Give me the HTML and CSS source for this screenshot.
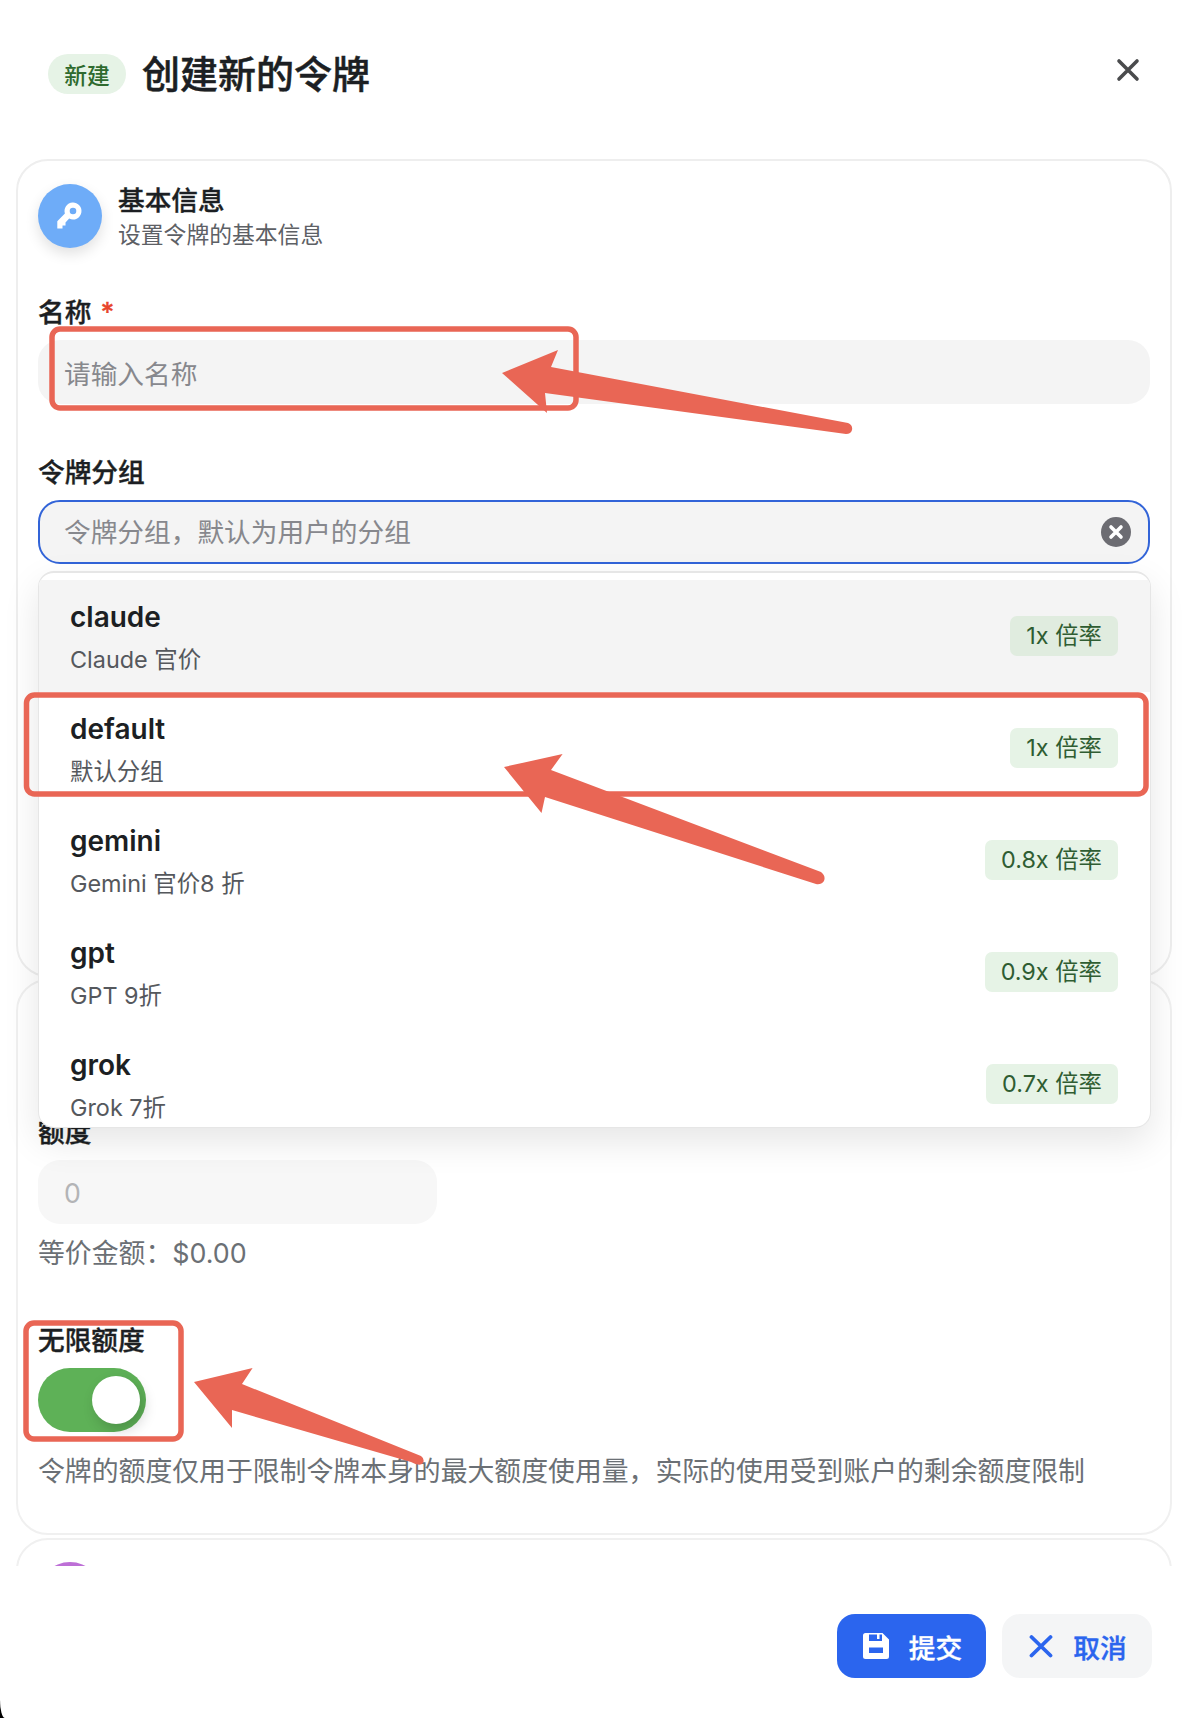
FILE: index.html
```html
<!DOCTYPE html>
<html lang="zh-CN">
<head>
    <meta charset="UTF-8">
    <meta name="viewport" content="width=device-width, initial-scale=1.0">
    <title>创建新的令牌</title>
    <link rel="stylesheet" href="styles.css">
</head>
<body>
    <div class="modal">
        <div class="modal-header">
            <span class="tag-new">新建</span>
            <h1>创建新的令牌</h1>
            <svg class="close-icon" width="24" height="24" viewBox="0 0 24 24">
                <path d="M3 3L21 21M21 3L3 21"/>
            </svg>
        </div>

        <div class="modal-body">
            <div class="card card-basic">
                <div class="card-head">
                    <div class="avatar avatar-blue">
                        <svg width="64" height="64" viewBox="0 0 64 64">
                            <path fill="#fff" fill-rule="evenodd" d="M26.900 29.600A8.500 8.500 0 1 1 31.200 34.600L27.500 38.500V41.500H24.500V44.500H19.300V37.200ZM35 23.700a3.300 3.300 0 1 0 0 6.600 3.300 3.300 0 0 0 0-6.600Z"/>
                        </svg>
                    </div>
                    <div>
                        <div class="card-title">基本信息</div>
                        <div class="card-sub">设置令牌的基本信息</div>
                    </div>
                </div>

                <label class="field-label field-first">名称 <span class="required">*</span></label>
                <input class="text-input name-input" type="text" placeholder="请输入名称">

                <label class="field-label field-next">令牌分组</label>
                <div class="select-field">
                    <input class="text-input text-input-focus" type="text" placeholder="令牌分组，默认为用户的分组">
                    <svg class="clear-icon" width="30" height="30" viewBox="0 0 30 30">
                        <circle cx="15" cy="15" r="15" fill="#6c6c72"/>
                        <path d="M10 10L20 20M20 10L10 20" stroke="#fff" stroke-width="3.600" stroke-linecap="round"/>
                    </svg>

                    <div class="group-menu">
                        <div class="group-item group-item-active">
                            <div>
                                <div class="group-name">claude</div>
                                <div class="group-desc">Claude 官价</div>
                            </div>
                            <span class="ratio ratio-active">1x 倍率</span>
                        </div>
                        <div class="group-item">
                            <div>
                                <div class="group-name">default</div>
                                <div class="group-desc">默认分组</div>
                            </div>
                            <span class="ratio">1x 倍率</span>
                        </div>
                        <div class="group-item">
                            <div>
                                <div class="group-name">gemini</div>
                                <div class="group-desc">Gemini 官价8 折</div>
                            </div>
                            <span class="ratio">0.8x 倍率</span>
                        </div>
                        <div class="group-item">
                            <div>
                                <div class="group-name">gpt</div>
                                <div class="group-desc">GPT 9折</div>
                            </div>
                            <span class="ratio">0.9x 倍率</span>
                        </div>
                        <div class="group-item">
                            <div>
                                <div class="group-name">grok</div>
                                <div class="group-desc">Grok 7折</div>
                            </div>
                            <span class="ratio">0.7x 倍率</span>
                        </div>
                    </div>
                </div>
            </div>

            <div class="card card-quota">
                <label class="field-label">额度</label>
                <input class="text-input quota-input" type="text" placeholder="0" disabled>
                <div class="help-text">等价金额：$0.00</div>

                <label class="field-label field-unlimited">无限额度</label>
                <div class="switch"><span class="switch-knob"></span></div>
                <div class="help-text help-switch">令牌的额度仅用于限制令牌本身的最大额度使用量，实际的使用受到账户的剩余额度限制</div>
            </div>

            <div class="card card-access">
                <div class="avatar avatar-purple"></div>
            </div>
        </div>

        <div class="modal-footer">
            <button class="btn btn-primary">
                <svg width="26" height="26" viewBox="0 0 26 26">
                    <path fill="#fff" fill-rule="evenodd" d="M2.500 0H19.500L26 6.500V23.500A2.500 2.500 0 0 1 23.500 26H2.500A2.500 2.500 0 0 1 0 23.500V2.500A2.500 2.500 0 0 1 2.500 0ZM6 1.500V8H19V1.500H16.500V6H14V1.500ZM6 14.500V20H20V14.500Z"/>
                </svg>
                提交
            </button>
            <button class="btn btn-light">
                <svg width="24" height="24" viewBox="0 0 24 24">
                    <path d="M2.500 3L21.500 21.500M21.500 3L2.500 21.500" stroke="#2b65ee" stroke-width="3.800" stroke-linecap="round"/>
                </svg>
                取消
            </button>
        </div>

        <!-- hand drawn marks on top of the screenshot -->
        <svg class="marks" width="1188" height="1718" viewBox="0 0 1188 1718">
            <rect x="52" y="329" width="524" height="79" rx="8"/>
            <rect x="26.500" y="695" width="1119.500" height="99" rx="8"/>
            <rect x="26" y="1323" width="155" height="116" rx="8"/>
            <path class="arrow" d="M502 373L558 350L551 367L848 423Q853 425 852 430Q851 434 846 434L545 393L547 413Z"/>
            <path class="arrow" d="M504 767L562.600 754L551 770L821 872Q826 876 824 881Q821 885 816 884L545 797L541.500 813Z"/>
            <path class="arrow" d="M194 1382L252.600 1368L242 1384L421 1456Q425 1459 423 1463Q420 1467 411 1462L232 1410V1428Z"/>
        </svg>
    </div>
</body>
</html>
```

FILE: styles.css
```css
* {
    box-sizing: border-box;
}
body {
    margin: 0;
    background-color: #000;
    font-family: "Inter", "Noto Sans CJK SC", sans-serif;
    color: #1c1f23;
}
.modal {
    position: relative;
    display: flex;
    flex-direction: column;
    width: 1188px;
    height: 1718px;
    overflow: hidden;
    background-color: #fff;
    border-bottom-left-radius: 5px 18px;
}
.modal-header {
    position: relative;
    display: flex;
    align-items: center;
    flex: none;
    height: 148px;
    padding-left: 48px;
}
.tag-new {
    display: flex;
    align-items: center;
    justify-content: center;
    width: 78px;
    height: 40px;
    border-radius: 20px;
    background-color: #e6f3e6;
    color: #2e6a2e;
    font-size: 22.800px;
    font-weight: 500;
}
.modal-header h1 {
    margin: 0 0 0 16px;
    font-size: 38px;
    font-weight: 500;
    line-height: 50px;
    -webkit-text-stroke: 0.5px;
}
.close-icon {
    position: absolute;
    top: 58px;
    right: 48px;
    fill: none;
    stroke: #4a4b4d;
    stroke-width: 3.600;
    stroke-linecap: round;
}
.modal-body {
    flex: 1;
    min-height: 0;
    overflow: hidden;
    padding: 11px 16px 0;
}
.card {
    border: 2px solid #f0f0f0;
    border-radius: 32px;
    padding: 21px 20px 0;
    background-color: #fff;
}
.card-basic {
    position: relative;
    z-index: 2;
    height: 818px;
    border-color: #eeeeee;
}
.card-quota {
    height: 556px;
    margin-top: 2px;
    padding-top: 133px;
}
.card-access {
    height: 200px;
    margin-top: 3px;
    padding-top: 22px;
}
.card-head {
    display: flex;
    align-items: center;
    gap: 16px;
}
.avatar {
    width: 64px;
    height: 64px;
    border-radius: 50%;
    flex: none;
}
.avatar-blue {
    background-color: #6eacf8;
    box-shadow: 0 6px 14px rgba(0, 0, 0, 0.12);
}
.avatar-purple {
    background-color: #bd6fd6;
}
.card-title {
    font-size: 26.700px;
    font-weight: 500;
    line-height: 37px;
    -webkit-text-stroke: 0.35px;
}
.card-sub {
    margin-top: 1px;
    color: #5d6065;
    font-size: 22.800px;
    line-height: 30px;
}
.field-label {
    display: block;
    margin-bottom: 10px;
    font-size: 26.700px;
    font-weight: 500;
    line-height: 36px;
    -webkit-text-stroke: 0.35px;
}
.field-first {
    margin-top: 44px;
}
.field-next {
    margin-top: 50px;
}
.field-unlimited {
    margin-top: 51px;
}
.required {
    margin-left: 2px;
    color: #e8452c;
}
.text-input {
    display: block;
    width: 100%;
    height: 64px;
    padding: 0 26px;
    border: 0;
    border-radius: 22px;
    outline: 0;
    background-color: #f4f4f4;
    color: #1c1f23;
    font-family: inherit;
    font-size: 26.700px;
}
.text-input::placeholder {
    color: #87888d;
    opacity: 1;
}
.name-input {
    padding-top: 3px;
}
.text-input-focus {
    padding: 0 24px;
    border: 2px solid #3264d8;
}
.quota-input {
    width: 399px;
    padding-top: 2px;
    background-color: #f7f7f7;
}
.quota-input::placeholder {
    color: #b3b4b6;
}
.select-field {
    position: relative;
}
.clear-icon {
    position: absolute;
    top: 17px;
    right: 19px;
}
.group-menu {
    position: absolute;
    top: 71px;
    left: 0;
    right: -1px;
    height: 557px;
    overflow: hidden;
    padding-top: 7px;
    border: 1px solid #e6e6e6;
    border-top-width: 2px;
    border-radius: 16px;
    background-color: #fff;
    box-shadow: 0 14px 36px rgba(0, 0, 0, 0.1);
}
.group-item {
    display: flex;
    align-items: center;
    justify-content: space-between;
    height: 112px;
    padding: 0 32px 0 31px;
}
.group-item-active {
    background-color: #f4f4f4;
}
.group-name {
    font-size: 28px;
    font-weight: 600;
    line-height: 40px;
}
.group-desc {
    margin-top: 8px;
    color: #55585d;
    font-size: 23.400px;
    line-height: 30px;
}
.ratio {
    padding: 0 16px;
    border-radius: 7px;
    background-color: #e6f3e6;
    color: #2f5d32;
    font-size: 23.400px;
    line-height: 40px;
}
.ratio-active {
    background-color: #e0ecdf;
}
.help-text {
    margin-top: 11px;
    color: #6b7075;
    font-size: 26.850px;
    line-height: 36px;
}
.help-switch {
    margin-top: 21px;
}
.switch {
    position: relative;
    width: 108px;
    height: 64px;
    border-radius: 32px;
    background-color: #5eb157;
}
.switch-knob {
    position: absolute;
    top: 8px;
    right: 6px;
    width: 48px;
    height: 48px;
    border-radius: 50%;
    background-color: #fff;
    box-shadow: 4px 6px 14px rgba(0, 0, 0, 0.18);
}
.modal-footer {
    display: flex;
    justify-content: flex-end;
    gap: 16px;
    flex: none;
    height: 152px;
    padding: 48px 36px 0 0;
}
.btn {
    display: flex;
    align-items: center;
    justify-content: center;
    gap: 20px;
    height: 64px;
    padding: 0 0 0 2px;
    border: 0;
    border-radius: 18px;
    font-family: inherit;
    font-size: 26.700px;
    font-weight: 500;
    -webkit-text-stroke: 0.35px;
}
.btn-primary {
    width: 149px;
    background-color: #2b65ee;
    color: #fff;
}
.btn-light {
    width: 150px;
    background-color: #f4f5f6;
    color: #2b65ee;
}
.marks {
    position: absolute;
    top: 0;
    left: 0;
    z-index: 5;
    pointer-events: none;
    fill: none;
    stroke: #e96655;
    stroke-width: 5.500;
}
.marks .arrow {
    fill: #e96655;
    stroke: none;
}
```
